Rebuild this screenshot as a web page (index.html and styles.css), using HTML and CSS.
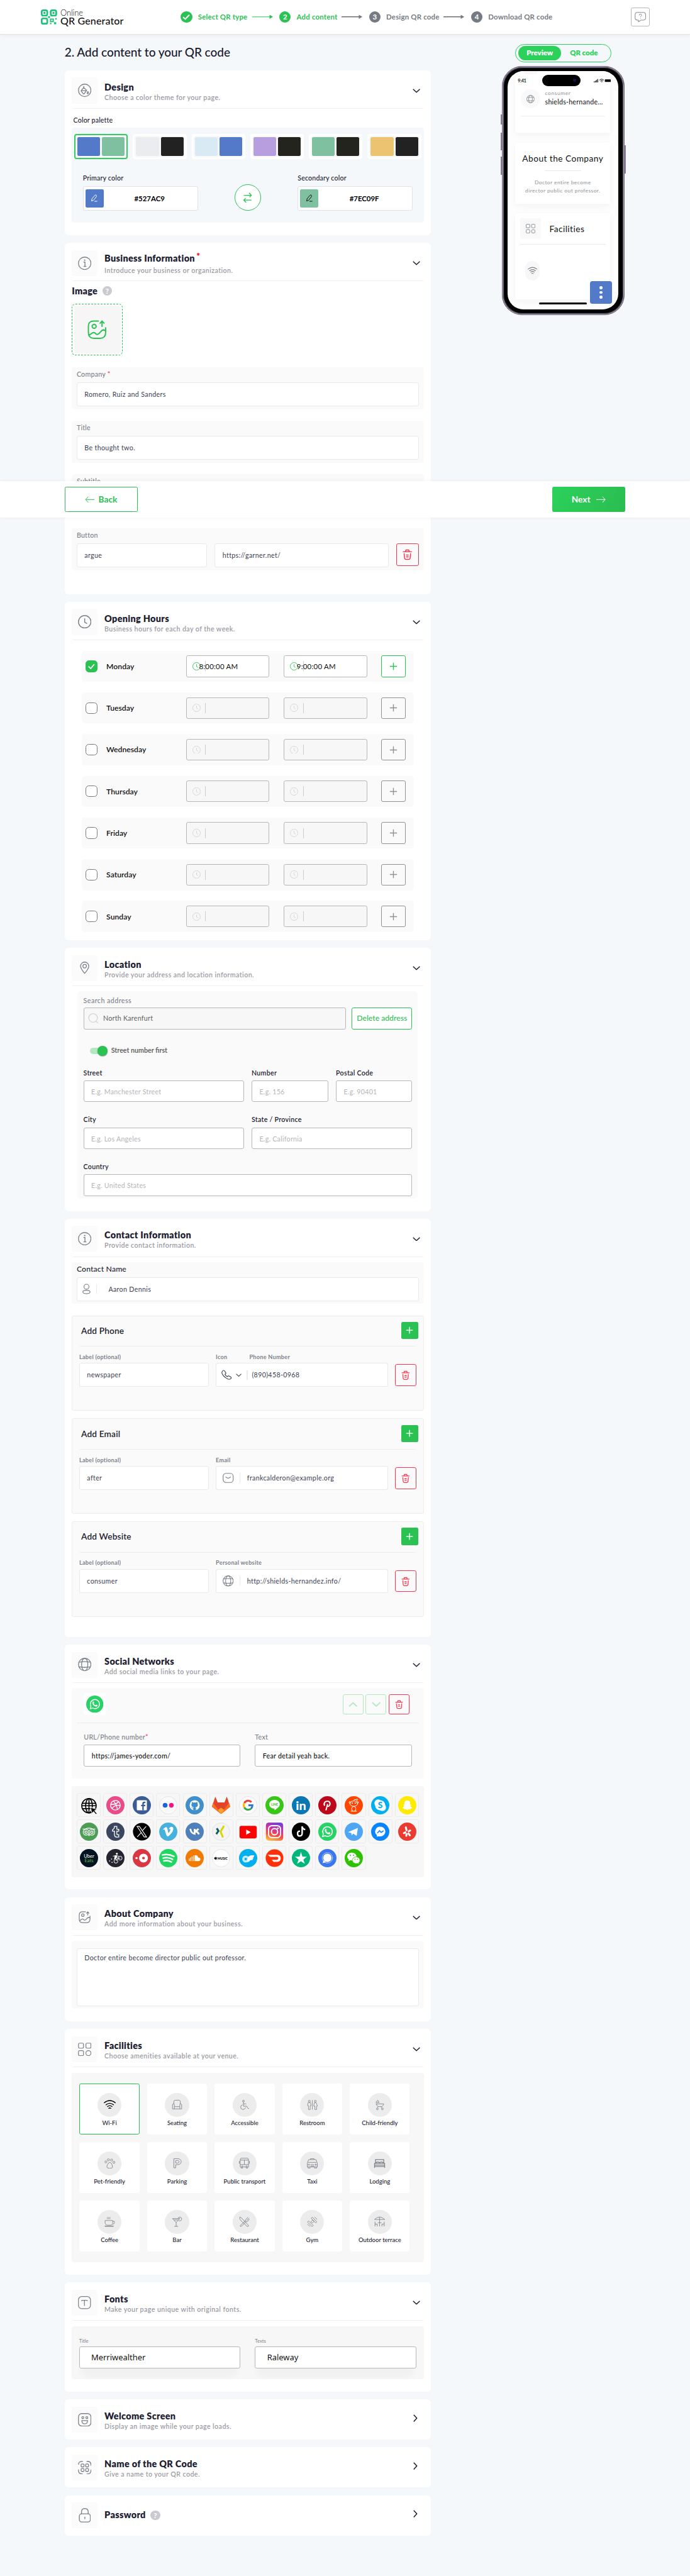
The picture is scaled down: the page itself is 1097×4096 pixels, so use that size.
FILE: index.html
```html
<!DOCTYPE html>
<html lang="en">
<head>
<meta charset="utf-8">
<title>Online QR Generator</title>
<link rel="stylesheet" href="styles.css">
</head>
<body>
<div class="page">
<svg class="defs" width="0" height="0">
  <symbol id="down" viewBox="0 0 16 9"><path d="M1 1l7 6.5L15 1" fill="none" stroke="currentColor" stroke-width="2"/></symbol>
  <symbol id="right" viewBox="0 0 9 16"><path d="M1 1l6.5 7L1 15" fill="none" stroke="currentColor" stroke-width="2"/></symbol>
  <symbol id="arrow" viewBox="0 0 44 10"><path d="M0 5h37" fill="none" stroke="currentColor" stroke-width="1.3"/><path class="tip" d="M36 .8L43.500 5 36 9.200z"/></symbol>
  <symbol id="info" viewBox="0 0 28 28"><circle cx="14" cy="14" r="13" fill="none" stroke="currentColor" stroke-width="1.7"/><path d="M11.500 11.500H14.500V20M11.500 20.500h6" fill="none" stroke="currentColor" stroke-width="1.800"/><circle cx="14" cy="7.500" r="1.500" fill="currentColor"/></symbol>
  <symbol id="clock" viewBox="0 0 28 28"><circle cx="14" cy="14" r="13" fill="none" stroke="currentColor" stroke-width="1.900"/><path d="M14 7v8l5 3" fill="none" stroke="currentColor" stroke-width="1.900"/></symbol>
  <symbol id="globe" viewBox="0 0 28 28"><g fill="none" stroke="currentColor" stroke-width="1.700"><circle cx="14" cy="14" r="13"/><ellipse cx="14" cy="14" rx="6.500" ry="13"/><path d="M2.500 9q11.500-2 23 0M2.500 19q11.500 2 23 0"/></g></symbol>
  <symbol id="photo" viewBox="0 0 40 40"><g fill="none" stroke="currentColor" stroke-width="2.600" stroke-linecap="round" stroke-linejoin="round"><path d="M23 2H13Q2 2 2 13v13q0 12 12 12h12q12 0 12-12V16M3 32l7-5q3-2 6 0l2 2q3 2 6-1l6-6q3-3 7 0"/><circle cx="14" cy="13" r="4.200"/><path d="M30.500 13V3M26.500 6.500l4-4.500 4 4.500"/></g></symbol>
  <symbol id="grid" viewBox="0 0 28 28"><g fill="none" stroke="currentColor" stroke-width="1.600"><rect x="1" y="1" width="10.500" height="10.500" rx="2.500"/><rect x="16.500" y="1" width="10.500" height="10.500" rx="2.500"/><rect x="1" y="16.500" width="10.500" height="10.500" rx="2.500"/><circle cx="21.750" cy="21.750" r="5.300"/></g></symbol>
  <symbol id="trash" viewBox="0 0 20 24"><g fill="none" stroke="currentColor" stroke-width="2" stroke-linecap="round"><path d="M1 6h18M6 5.500l1-3.500h6l1 3.500M3 10l1 10q.3 2.500 3 2.500h6q2.700 0 3-2.500L17 10M8 13h4M8 17h4"/></g></symbol>
  <symbol id="plus" viewBox="0 0 16 16"><path d="M8 1v14M1 8h14" fill="none" stroke="currentColor" stroke-width="1.700"/></symbol>
  <symbol id="pen" viewBox="0 0 16 16"><path d="M2 14l1-5 6-7q2-1.500 3 0t0 3l-6 7.500zM8 14.500h6" fill="none" stroke="currentColor" stroke-width="1.300"/></symbol>
  <symbol id="wifi" viewBox="0 0 24 20"><g fill="none" stroke="currentColor" stroke-width="1.700" stroke-linecap="round"><path d="M1 6Q12-3 23 6M4.500 10q7.500-6 15 0M7.500 13.500q4.500-3.500 9 0M10 17q2-1.500 4 0"/></g></symbol>
  <symbol id="whatsapp" viewBox="0 0 38 38"><circle cx="19" cy="19" r="19" fill="#27d366"/><path d="M9 29l1.500-5.400a10 10 0 1 1 4 4z" fill="none" stroke="#fff" stroke-width="2"/><path d="M15 13.500q1.500-1 2.500 2-.3 1.500-1 2 1.300 2.800 4.300 4 1-1.500 2-1.500l2.500 1.500q-.5 3-3.500 3-6.500-1-8.300-7.500 0-2.500 1.500-3.500z" fill="#fff"/></symbol>
</svg>

<header class="topbar">
  <div class="logo">
    <svg width="34" height="32" viewBox="0 0 34 32"><g fill="none" stroke="#1fc07a" stroke-width="3.500"><rect x="1.750" y="1.750" width="11.500" height="11" rx="3"/><rect x="20.500" y="1.750" width="11.500" height="11" rx="3"/><rect x="1.750" y="18.750" width="11.500" height="11" rx="3"/></g><g fill="#1fc07a"><rect x="5.500" y="5.300" width="4" height="4"/><rect x="24.300" y="5.300" width="4" height="4"/><rect x="15" y="14" width="4" height="4"/><path d="M19 19h8v7.500h-8zm2.300 2.300v3h3.300v-3zM30 18h3v3h-3zM27.500 26.500h4.500v4.500h-4.500zM19 28h3v3h-3z" fill-rule="evenodd"/></g></svg>
    <div class="logo-text"><span>Online</span><b>QR Generator</b></div>
  </div>
  <nav class="steps">
    <span class="step on"><i><svg width="16" height="13" viewBox="0 0 16 13"><path d="M1.500 7l4.500 4L14.500 2" fill="none" stroke="#fff" stroke-width="2.600"/></svg></i><b style="width:106px">Select QR type</b></span>
    <svg class="arr on" width="44" height="10"><use href="#arrow"/></svg>
    <span class="step on"><i>2</i><b style="width:87px">Add content</b></span>
    <svg class="arr" width="44" height="10"><use href="#arrow"/></svg>
    <span class="step"><i>3</i><b style="width:113px">Design QR code</b></span>
    <svg class="arr" width="44" height="10"><use href="#arrow"/></svg>
    <span class="step"><i>4</i><b style="width:138px">Download QR code</b></span>
  </nav>
  <span class="help"><svg width="24" height="22" viewBox="0 0 24 22"><path d="M6 1h12q5 0 5 5v6q0 5-5 5h-5l-5 4v-4H6q-5 0-5-5V6q0-5 5-5z" fill="none" stroke="#8b8f95" stroke-width="1.400"/><path d="M9.500 7q0-2.500 2.500-2.500T14.500 7q0 1.300-1.300 2T12 11M12 12.800v1.200" fill="none" stroke="#8b8f95" stroke-width="1.300"/></svg></span>
</header>

<div class="layout">
<main class="main">
  <h1>2. Add content to your QR code</h1>

  <section class="card design">
    <div class="head"><span class="ico"><svg width="28" height="28" viewBox="0 0 28 28"><g fill="none" stroke="currentColor" stroke-width="1.700"><circle cx="14" cy="14" r="13"/><path d="M12 5v4M12 8l6 6-5 7q-1 1-2 0l-4-5q-1-1 0-2zM6.500 14.500H18M20.500 16q2.500 4.500 0 5t0-5"/></g></svg></span><div><h2>Design</h2><p>Choose a color theme for your page.</p></div><svg class="chev" width="16" height="9"><use href="#down"/></svg></div>
    <h3 class="plabel">Color palette</h3>
    <div class="palette">
      <div class="swatches">
        <span class="sw sel"><i style="background:#527ac9"></i><i style="background:#7ec09f"></i></span>
        <span class="sw"><i style="background:#ebecf0"></i><i style="background:#222"></i></span>
        <span class="sw"><i style="background:#d9eaf5"></i><i style="background:#527ac9"></i></span>
        <span class="sw"><i style="background:#b69edf"></i><i style="background:#24241f"></i></span>
        <span class="sw"><i style="background:#7ec09f"></i><i style="background:#24241f"></i></span>
        <span class="sw"><i style="background:#ecc371"></i><i style="background:#222"></i></span>
      </div>
      <div class="colors">
        <div><label>Primary color</label><div class="cinput"><span style="background:#527ac9;color:#fff"><svg width="16" height="16"><use href="#pen"/></svg></span><b>#527AC9</b></div></div>
        <span class="swap"><svg width="20" height="22" viewBox="0 0 20 22"><path d="M2 6h16M13 1l5 5-4 4M18 16H2M7 21l-5-5 4-4" fill="none" stroke="#2bc253" stroke-width="1.700"/></svg></span>
        <div><label>Secondary color</label><div class="cinput"><span style="background:#7ec09f;color:#111"><svg width="16" height="16"><use href="#pen"/></svg></span><b>#7EC09F</b></div></div>
      </div>
    </div>
  </section>

  <section class="card business">
    <div class="head"><span class="ico"><svg width="28" height="28"><use href="#info"/></svg></span><div><h2>Business Information<sup>*</sup></h2><p>Introduce your business or organization.</p></div><svg class="chev" width="16" height="9"><use href="#down"/></svg></div>
    <div class="imgline"><h2>Image</h2><span class="q">?</span></div>
    <div class="upload"><span><svg width="40" height="40"><use href="#photo"/></svg></span></div>
    <div class="field"><label>Company <em>*</em></label><div class="in">Romero, Ruiz and Sanders</div></div>
    <div class="field"><label>Title</label><div class="in">Be thought two.</div></div>
    <div class="field"><label>Subtitle</label><div class="in"></div></div>
    <div class="field"><label>Button</label><div class="btnrow"><div class="in">argue</div><div class="in">https://garner.net/</div><span class="del"><svg width="20" height="23"><use href="#trash"/></svg></span></div></div>
  </section>

  <section class="card hours">
    <div class="head"><span class="ico"><svg width="28" height="28"><use href="#clock"/></svg></span><div><h2>Opening Hours</h2><p>Business hours for each day of the week.</p></div><svg class="chev" width="16" height="9"><use href="#down"/></svg></div>
    <div class="days">
      <div class="day on"><span class="cb"><svg width="14" height="12" viewBox="0 0 14 12"><path d="M1 6l4.500 4.500L13 1.500" fill="none" stroke="#fff" stroke-width="2.200"/></svg></span><b>Monday</b><span class="time"><svg width="17" height="17"><use href="#clock"/></svg><i></i><span>8:00:00 AM</span></span><span class="time"><svg width="17" height="17"><use href="#clock"/></svg><i></i><span>9:00:00 AM</span></span><span class="add"><svg width="17" height="17"><use href="#plus"/></svg></span></div>
      <div class="day"><span class="cb"></span><b>Tuesday</b><span class="time"><svg width="17" height="17"><use href="#clock"/></svg><i></i></span><span class="time"><svg width="17" height="17"><use href="#clock"/></svg><i></i></span><span class="add"><svg width="17" height="17"><use href="#plus"/></svg></span></div>
      <div class="day"><span class="cb"></span><b>Wednesday</b><span class="time"><svg width="17" height="17"><use href="#clock"/></svg><i></i></span><span class="time"><svg width="17" height="17"><use href="#clock"/></svg><i></i></span><span class="add"><svg width="17" height="17"><use href="#plus"/></svg></span></div>
      <div class="day"><span class="cb"></span><b>Thursday</b><span class="time"><svg width="17" height="17"><use href="#clock"/></svg><i></i></span><span class="time"><svg width="17" height="17"><use href="#clock"/></svg><i></i></span><span class="add"><svg width="17" height="17"><use href="#plus"/></svg></span></div>
      <div class="day"><span class="cb"></span><b>Friday</b><span class="time"><svg width="17" height="17"><use href="#clock"/></svg><i></i></span><span class="time"><svg width="17" height="17"><use href="#clock"/></svg><i></i></span><span class="add"><svg width="17" height="17"><use href="#plus"/></svg></span></div>
      <div class="day"><span class="cb"></span><b>Saturday</b><span class="time"><svg width="17" height="17"><use href="#clock"/></svg><i></i></span><span class="time"><svg width="17" height="17"><use href="#clock"/></svg><i></i></span><span class="add"><svg width="17" height="17"><use href="#plus"/></svg></span></div>
      <div class="day"><span class="cb"></span><b>Sunday</b><span class="time"><svg width="17" height="17"><use href="#clock"/></svg><i></i></span><span class="time"><svg width="17" height="17"><use href="#clock"/></svg><i></i></span><span class="add"><svg width="17" height="17"><use href="#plus"/></svg></span></div>
    </div>
  </section>

  <section class="card location">
    <div class="head"><span class="ico"><svg width="20" height="26" viewBox="0 0 20 26"><g fill="none" stroke="currentColor" stroke-width="1.700"><path d="M10 24.500Q1.500 15 1.500 9.500a8.500 8.500 0 0 1 17 0q0 5.500-8.500 15z"/><circle cx="10" cy="9.500" r="3.700"/></g></svg></span><div><h2>Location</h2><p>Provide your address and location information.</p></div><svg class="chev" width="16" height="9"><use href="#down"/></svg></div>
    <div class="loc">
      <label class="soft">Search address</label>
      <div class="search"><div class="box"><svg width="22" height="22" viewBox="0 0 22 22"><circle cx="10.500" cy="10" r="9" fill="none" stroke="#cfcfcf" stroke-width="1.500"/><path d="M16 16.500l5 4" stroke="#cfcfcf" stroke-width="1.500"/></svg><span>North Karenfurt</span></div><span class="delete">Delete address</span></div>
      <div class="toggle"><span class="track"><i></i></span><b>Street number first</b></div>
      <div class="lgrid">
        <div class="c1"><label>Street</label><div class="box">E.g. Manchester Street</div></div>
        <div class="c2"><label>Number</label><div class="box">E.g. 156</div></div>
        <div class="c3"><label>Postal Code</label><div class="box">E.g. 90401</div></div>
        <div class="c1"><label>City</label><div class="box">E.g. Los Angeles</div></div>
        <div class="c23"><label>State / Province</label><div class="box">E.g. California</div></div>
        <div class="c13"><label>Country</label><div class="box">E.g. United States</div></div>
      </div>
    </div>
  </section>

  <section class="card contact">
    <div class="head"><span class="ico"><svg width="28" height="28"><use href="#info"/></svg></span><div><h2>Contact Information</h2><p>Provide contact information.</p></div><svg class="chev" width="16" height="9"><use href="#down"/></svg></div>
    <div class="cname"><label>Contact Name</label><div class="in"><svg width="17" height="22" viewBox="0 0 17 22"><g fill="none" stroke="#7b828a" stroke-width="1.500"><circle cx="8.500" cy="6.500" r="5.200"/><ellipse cx="8.500" cy="17.500" rx="7.500" ry="3.600"/></g></svg><i></i><span>Aaron Dennis</span></div></div>
    <div class="group">
      <div class="ghead"><h3>Add Phone</h3><span><svg width="16" height="16"><use href="#plus"/></svg></span></div>
      <div class="grow"><div><label>Label (optional)</label><div class="in">newspaper</div></div>
      <div><div class="two"><label>Icon</label><label>Phone Number</label></div><div class="in ph"><svg width="22" height="22" viewBox="0 0 22 22"><path d="M2 3q3-3.500 5 0l2 3q1 2-1.500 3.500Q9 13 12.500 14.500q1.500-2.500 3.500-1.500l3.500 2q2.500 2-1 4.500-4 2-10.500-3.500T1 6q0-2 1-3z" fill="none" stroke="#3c4252" stroke-width="1.500"/></svg><svg width="12" height="7"><use href="#down"/></svg><i></i><span>(890)458-0968</span></div></div>
      <span class="del"><svg width="18" height="20"><use href="#trash"/></svg></span></div>
    </div>
    <div class="group">
      <div class="ghead"><h3>Add Email</h3><span><svg width="16" height="16"><use href="#plus"/></svg></span></div>
      <div class="grow"><div><label>Label (optional)</label><div class="in">after</div></div>
      <div><label>Email</label><div class="in em"><svg width="23" height="21" viewBox="0 0 23 21"><g fill="none" stroke="#7b828a" stroke-width="1.500"><rect x="1" y="1" width="21" height="19" rx="6"/><path d="M6 8q5.500 6 11 0"/></g></svg><i></i><span>frankcalderon@example.org</span></div></div>
      <span class="del"><svg width="18" height="20"><use href="#trash"/></svg></span></div>
    </div>
    <div class="group">
      <div class="ghead"><h3>Add Website</h3><span><svg width="16" height="16"><use href="#plus"/></svg></span></div>
      <div class="grow"><div><label>Label (optional)</label><div class="in">consumer</div></div>
      <div><label>Personal website</label><div class="in em"><svg width="23" height="23"><use href="#globe"/></svg><i></i><span>http://shields-hernandez.info/</span></div></div>
      <span class="del"><svg width="18" height="20"><use href="#trash"/></svg></span></div>
    </div>
  </section>

  <section class="card social">
    <div class="head"><span class="ico"><svg width="28" height="28"><use href="#globe"/></svg></span><div><h2>Social Networks</h2><p>Add social media links to your page.</p></div><svg class="chev" width="16" height="9"><use href="#down"/></svg></div>
    <div class="spanel">
      <div class="stop"><span class="wa"><svg width="36" height="36"><use href="#whatsapp"/></svg></span><span class="mv"><svg class="up" width="19" height="11"><use href="#down"/></svg></span><span class="mv"><svg width="19" height="11"><use href="#down"/></svg></span><span class="mv red"><svg width="17" height="19"><use href="#trash"/></svg></span></div>
      <div class="sfields"><div><label>URL/Phone number<em>*</em></label><div class="box">https://james-yoder.com/</div></div><div><label>Text</label><div class="box">Fear detail yeah back.</div></div></div>
    </div>
    <div class="tiles">
      <span><svg viewBox="0 0 38 38"><g fill="none" stroke="#000" stroke-width="2.200"><circle cx="19" cy="20" r="15"/><ellipse cx="19" cy="20" rx="7" ry="15"/><path d="M19 5v30M4 20h30M5 15h28M6 26h26"/></g><path d="M22 23l14 5-5 2.500 5 6-2.500 2-5-6-3 4z" fill="#000" stroke="#f7f7f7" stroke-width="1.400"/></svg></span>
      <span><svg viewBox="0 0 38 38"><circle cx="19" cy="19" r="19" fill="#ea4c89"/><g fill="none" stroke="#fff" stroke-width="1.800"><circle cx="19" cy="19" r="10"/><path d="M9.500 17q11 1 16-5.500M15 10q7 8 8 18M12 26q5-9 17-6.500"/></g></svg></span>
      <span><svg viewBox="0 0 38 38"><circle cx="19" cy="19" r="19" fill="#3a5a98"/><rect x="8.500" y="8.500" width="21" height="21" rx="1.500" fill="#fff"/><path d="M20 29.500V21h-2.500v-3H20v-2.500q0-4 4-4h2.500v3H25q-2 0-2 2V18h3.500l-.5 3h-3v8.500z" fill="#3a5a98"/></svg></span>
      <span><svg viewBox="0 0 38 38"><circle cx="19" cy="19" r="18.300" fill="#fafafa" stroke="#ddd"/><circle cx="12.500" cy="19" r="5" fill="#1a63dc"/><circle cx="25.500" cy="19" r="4.800" fill="#ff0d84"/></svg></span>
      <span><svg viewBox="0 0 38 38"><circle cx="19" cy="19" r="19" fill="#4190cd"/><circle cx="19" cy="19" r="10.500" fill="#fff"/><path d="M16 30v-4.500q-3 0-4.500-2.500 2 0 2.700 1.200l2 .3q.3-1 1-1.500-5-.5-5-5 0-1.700 1.100-2.900-.4-1.500.2-2.900 1.200 0 2.900 1.200 2.600-.6 5.200 0 1.700-1.200 2.900-1.200.6 1.400.2 2.900 1.100 1.200 1.100 2.900 0 4.500-5 5 .9.900.9 2.200V30z" fill="#4190cd"/></svg></span>
      <span><svg viewBox="0 0 38 38"><path d="M19 37L0 22 7 1l5 12h14l5-12 7 21z" fill="#e2432a"/><path d="M19 37L0 22l2.500-8L12 27zM19 37l19-15-2.500-8L26 27z" fill="#fc6d26"/><path d="M0 22l2.500-8L19 37zM38 22l-2.500-8L19 37z" fill="#fc6d26"/><path d="M19 37l-6.500-8 6.500-5 6.500 5z" fill="#fca326"/></svg></span>
      <span><svg viewBox="0 0 38 38"><circle cx="19" cy="19" r="18.300" fill="#fcfcfc" stroke="#ddd"/><g fill="none" stroke-width="4"><path d="M26 12.500A9.200 9.200 0 0 0 11 14.500" stroke="#ea4335"/><path d="M11 14.500a9.200 9.200 0 0 0 0 9" stroke="#fbbc05"/><path d="M11 23.500a9.200 9.200 0 0 0 14 2.500" stroke="#34a853"/><path d="M25 26q3-3 3-7h-8.500" stroke="#2f78d4"/></g></svg></span>
      <span><svg viewBox="0 0 38 38"><circle cx="19" cy="19" r="19" fill="#3ac619"/><path d="M19 8c6.500 0 11 4 11 9 0 5.500-7.500 9.500-11 12.500v-3.500c-6.500 0-11-4-11-9s4.500-9 11-9z" fill="#fff"/><text x="19" y="20" text-anchor="middle" font-size="6.500" fill="#3ac619" class="b">LINE</text></svg></span>
      <span><svg viewBox="0 0 38 38"><circle cx="19" cy="19" r="19" fill="#0a77b4"/><text x="19" y="29" text-anchor="middle" font-size="26" fill="#fff" class="b">in</text></svg></span>
      <span><svg viewBox="0 0 38 38"><circle cx="19" cy="19" r="19" fill="#bd081c"/><path d="M16 29.500l3.500-13M13.300 20q-2.500-4 .5-7.500 3.300-3 8-1.500 4 2.500 2.200 7.500-2.600 4.500-6 1.500" fill="none" stroke="#fff" stroke-width="2.600"/></svg></span>
      <span><svg viewBox="0 0 38 38"><circle cx="19" cy="19" r="19" fill="#ff4500"/><g fill="none" stroke="#fff" stroke-width="1.300"><ellipse cx="19" cy="15.500" rx="8" ry="5.500"/><ellipse cx="19" cy="26.500" rx="4.500" ry="5"/><path d="M19 10l1-3 4 .5M14 31l-1 .5h5M24 31l1 .5h-5"/><circle cx="25.500" cy="7.500" r="1.500"/><circle cx="11" cy="13" r="1.800"/><circle cx="27" cy="13" r="1.800"/></g><circle cx="16" cy="14.500" r="1.300" fill="#fff"/><circle cx="22" cy="14.500" r="1.300" fill="#fff"/></svg></span>
      <span><svg viewBox="0 0 38 38"><circle cx="19" cy="19" r="19" fill="#00aff0"/><rect x="7" y="7" width="15" height="15" rx="7" fill="#fff"/><rect x="16" y="16" width="15" height="15" rx="7" fill="#fff"/><circle cx="19" cy="19" r="10.500" fill="#fff"/><text x="19" y="25.500" text-anchor="middle" font-size="18" fill="#00aff0" class="b">S</text></svg></span>
      <span><svg viewBox="0 0 38 38"><circle cx="19" cy="19" r="19" fill="#ffea00"/><path d="M19 9q6 0 6 6v3l2.500-.5-2 3q1 3 4 4l-3.500 1.500-.5 1.500-3-.3L19 29l-3.500-1.800-3 .3-.5-1.500L8.500 24.500q3-1 4-4l-2-3 2.500.5v-3q0-6 6-6z" fill="#fff"/></svg></span>

      <span><svg viewBox="0 0 38 38"><circle cx="19" cy="19" r="19" fill="#4c9e55"/><g fill="none" stroke="#fff" stroke-width="1.700"><circle cx="13" cy="20" r="6"/><circle cx="25" cy="20" r="6"/><circle cx="13" cy="20" r="2.500"/><circle cx="25" cy="20" r="2.500"/><path d="M6 13.500h5q8-3.500 16 0h5M17.500 25l1.500 2 1.500-2"/></g></svg></span>
      <span><svg viewBox="0 0 38 38"><circle cx="19" cy="19" r="19" fill="#3a4560"/><path d="M17 8h5v6h4v4h-4v6q0 2 4 1.300V30q-9 2-9-5v-7h-4v-3q4-1.500 4-7z" fill="none" stroke="#fff" stroke-width="1.700"/></svg></span>
      <span><svg viewBox="0 0 38 38"><circle cx="19" cy="19" r="18.500" fill="#000"/><path d="M9 8h5l15 22h-5zM28 8l-8.500 9.500M18 20.500L9.500 30" fill="none" stroke="#fff" stroke-width="1.400"/></svg></span>
      <span><svg viewBox="0 0 38 38"><circle cx="19" cy="19" r="19" fill="#45b1dc"/><path d="M8 14q5-5 7-4.500t3 6.500 2 5.500 3-5-3-2.500q2-5.500 6.500-5t2.500 7-10.500 13q-3 0-4.500-6t-2.500-8-2.500 0z" fill="#fff"/></svg></span>
      <span><svg viewBox="0 0 38 38"><circle cx="19" cy="19" r="19" fill="#4f80b9"/><path d="M10 13q1.500 9.500 9 10.500V13M19 18q4.500-.5 8-5M20.500 17.500q5 1.500 7.500 7" fill="none" stroke="#fff" stroke-width="3.600"/></svg></span>
      <span><svg viewBox="0 0 38 38"><circle cx="19" cy="19" r="18.300" fill="#f4f4f4" stroke="#ddd"/><path d="M10 12l3.500 5.500L9 24" fill="none" stroke="#0a5f62" stroke-width="4"/><path d="M25 7l-7 12 5 12" fill="none" stroke="#d5d800" stroke-width="4"/></svg></span>
      <span><svg viewBox="0 0 38 38"><rect x="1" y="7" width="36" height="26" rx="4" fill="#f00"/><path d="M15 14.500l9.500 5.500-9.500 5.500z" fill="#fff"/></svg></span>
      <span><svg viewBox="0 0 38 38"><defs><linearGradient id="ig" x1=".2" y1="1" x2=".5" y2="0"><stop offset="0" stop-color="#fdc84c"/><stop offset=".35" stop-color="#f7503f"/><stop offset=".65" stop-color="#d4309a"/><stop offset="1" stop-color="#7a3fd0"/></linearGradient></defs><rect x="1" width="36" height="38" rx="6" fill="url(#ig)"/><g fill="none" stroke="#fff" stroke-width="2.500"><rect x="6.500" y="6.500" width="25" height="25" rx="7"/><circle cx="19" cy="19" r="6.500"/></g><circle cx="26" cy="12" r="1.700" fill="#fff"/></svg></span>
      <span><svg viewBox="0 0 38 38"><circle cx="19" cy="19" r="19" fill="#000"/><path d="M17 18q-5-.5-5 5t4.800 5 4.700-5.500V8q1 6 6.500 6.500" fill="none" stroke="#fff" stroke-width="3.200"/></svg></span>
      <span><svg><use href="#whatsapp"/></svg></span>
      <span><svg viewBox="0 0 38 38"><circle cx="19" cy="19" r="19" fill="#4fa6f5"/><path d="M7 20l20.500-9L25 28l-7-5-3 3.500-1.500-5z" fill="#fff"/></svg></span>
      <span><svg viewBox="0 0 38 38"><circle cx="19" cy="19" r="19" fill="#0a84ff"/><path d="M19 8.500a10.500 10 0 0 1 0 20.500q-2 0-4-.6L12 30v-4A10.500 10 0 0 1 19 8.500z" fill="#fff"/><path d="M13 22l4.500-5 3.500 3.500L26 17" fill="none" stroke="#0a84ff" stroke-width="2.200"/></svg></span>
      <span><svg viewBox="0 0 38 38"><circle cx="19" cy="19" r="19" fill="#ea3b31"/><g stroke="#fff" stroke-width="4" stroke-linecap="round"><path d="M17.500 16l-1.500-6M15 20.500l-3 1.500M17.500 24l-.5 3.500M21.500 23l3 3.500M22 18.500l3-2"/></g></svg></span>

      <span><svg viewBox="0 0 38 38"><circle cx="19" cy="19" r="19" fill="#031321"/><text x="19" y="18" text-anchor="middle" font-size="10" fill="#fff">Uber</text><text x="19" y="27" text-anchor="middle" font-size="10" fill="#68b643">Eats</text></svg></span>
      <span><svg viewBox="0 0 38 38"><circle cx="19" cy="19" r="19" fill="#24242e"/><g fill="none" stroke="#fff" stroke-width="1.300"><circle cx="20" cy="25.500" r="4"/><circle cx="29" cy="19" r="4"/><path d="M20 25l4-5 5-1M14 15l6-1 4 6M20 14l6 1"/></g><circle cx="22" cy="10" r="2" fill="#fff"/><path d="M18 13h5l-2 7-5 2zM6 24h2v2H6zM10 20h2v2h-2zM11 27h2v2h-2z" fill="#fff"/></svg></span>
      <span><svg viewBox="0 0 38 38"><circle cx="19" cy="19" r="19" fill="#da3743"/><circle cx="22.500" cy="19" r="6" fill="none" stroke="#fff" stroke-width="6.500"/><circle cx="8" cy="19" r="2.400" fill="#fff"/></svg></span>
      <span><svg viewBox="0 0 38 38"><circle cx="19" cy="19" r="19" fill="#1ed760"/><path d="M7 12.500q12-3 24 3M8.500 19q10-2.500 19.500 2.500M10 25q8-2 15.500 2" fill="none" stroke="#fff" stroke-width="3.300" stroke-linecap="round"/></svg></span>
      <span><svg viewBox="0 0 38 38"><circle cx="19" cy="19" r="19" fill="#f27a00"/><path d="M19 13q6-1.500 7.500 5 4.500-.5 4.500 3.700 0 3.500-4 3.500h-8zM16 13.500h1.500v11.700H16zM13 15.500h1.500v9.700H13zM10 17.700h1.500v7.500H10zM7 20h1.500v5H7z" fill="#fff"/></svg></span>
      <span><svg viewBox="0 0 38 38"><circle cx="19" cy="19" r="18.300" fill="#fefefe" stroke="#ddd"/><path d="M7.500 17.500q2.500-1 2.500 1.500l-.5 2.500q-2 1-4-.5-2-3.500 2-3.500zM7.500 16.500L8.500 15" fill="#111" stroke="#111" stroke-width=".5"/><text x="22" y="21.800" text-anchor="middle" font-size="6.500" class="b">MUSIC</text></svg></span>
      <span><svg viewBox="0 0 38 38"><circle cx="19" cy="19" r="19" fill="#00aff0"/><circle cx="14" cy="21" r="5" fill="none" stroke="#bfeafc" stroke-width="4.500"/><path d="M17 27q0-13 8-14h7l-2 5h-3l3 1-2 4-5 .5q-1 3.500-6 3.500z" fill="#fff"/></svg></span>
      <span><svg viewBox="0 0 38 38"><circle cx="19" cy="19" r="18.500" fill="#ff3008"/><path d="M5 12h19q8 0 8 7.500T24 27h-7l-4-4.500h11q3 0 3-3t-3-3H10z" fill="#fff"/></svg></span>
      <span><svg viewBox="0 0 38 38"><circle cx="19" cy="19" r="19" fill="#00b67a"/><path d="M19 6l3 10h9.500l-7.500 6 3 9-8-5.500-8 5.500 3-9-7.500-6H16z" fill="#fff"/></svg></span>
      <span><svg viewBox="0 0 38 38"><circle cx="19" cy="19" r="19" fill="#3a76f0"/><circle cx="19" cy="18.500" r="10.800" fill="none" stroke="#fff" stroke-width="1.300" stroke-dasharray="2 1"/><circle cx="19" cy="18.500" r="8.800" fill="#fff"/><path d="M9 29.500l2-6 5 4z" fill="#fff"/></svg></span>
      <span><svg viewBox="0 0 38 38"><circle cx="19" cy="19" r="19" fill="#2dc100"/><path d="M15 7.500a9.500 8.200 0 0 1 0 16.500L11 23.500l-3 2 .8-3.600A9.500 8.200 0 0 1 15 7.500z" fill="#fff"/><path d="M24 16.500a8.200 7 0 0 1 5.500 12l.5 3-3-1.500a8.200 7 0 1 1-3-13.500z" fill="#fff" stroke="#2dc100"/><g fill="#2dc100"><circle cx="12" cy="13" r="1.300"/><circle cx="18.500" cy="13" r="1.300"/><circle cx="21.500" cy="21.500" r="1"/><circle cx="26.500" cy="21.500" r="1"/></g></svg></span>
    </div>
  </section>

  <section class="card about">
    <div class="head"><span class="ico"><svg width="25" height="25"><use href="#photo"/></svg></span><div><h2>About Company</h2><p>Add more information about your business.</p></div><svg class="chev" width="16" height="9"><use href="#down"/></svg></div>
    <div class="apanel"><div class="area">Doctor entire become director public out professor.</div></div>
  </section>

  <section class="card facilities">
    <div class="head"><span class="ico"><svg width="28" height="28"><use href="#grid"/></svg></span><div><h2>Facilities</h2><p>Choose amenities available at your venue.</p></div><svg class="chev" width="16" height="9"><use href="#down"/></svg></div>
    <div class="fgrid">
      <div class="sel"><i><svg viewBox="0 0 24 20"><use href="#wifi"/></svg></i>Wi-Fi</div>
      <div><i><svg viewBox="0 0 24 24"><path d="M5 11V5q0-3 3-3h8q3 0 3 3v6M2 12q0-2 2-2t2 2v4h12v-4q0-2 2-2t2 2v9h-4H2zM6 16v5M18 16v5"/></svg></i>Seating</div>
      <div><i><svg viewBox="0 0 24 24"><circle cx="10" cy="4" r="2"/><path d="M10 6v9h7l3 5h2M10 10h6M8 12q-4 1-4 5t4 5 7-4"/></svg></i>Accessible</div>
      <div><i><svg viewBox="0 0 28 24"><path d="M14 1v22M4 7h6l1 7H9v9H5v-9H3zM19 7h4l3 8h-2v8h-4v-8h-3z"/><circle cx="7" cy="3.500" r="2.200"/><circle cx="21" cy="3.500" r="2.200"/></svg></i>Restroom</div>
      <div><i><svg viewBox="0 0 24 24"><path d="M4 10h17q-1 6-7 6h-3q-5 0-6-6zM4 7l4-5 3 5zM9 16l-2 3M15 16l2 3"/><circle cx="7" cy="21" r="2"/><circle cx="18" cy="21" r="2"/></svg></i>Child-friendly</div>
      <div><i><svg viewBox="0 0 24 24"><path d="M12 10q3 0 4.500 4T18 21q-1 2-6 2t-6-2q-1-3 1.500-7T12 10z"/><circle cx="9" cy="4.500" r="2.300"/><circle cx="16" cy="5" r="2.300"/><circle cx="3.500" cy="9" r="2.200"/><circle cx="21" cy="10" r="2.200"/></svg></i>Pet-friendly</div>
      <div><i><svg viewBox="0 0 24 24"><path d="M5 2h9q7 1 7 6.500T14 15H9v7H5zM9 6v5.500h4.500q3-.5 3-2.800T13.500 6z"/></svg></i>Parking</div>
      <div><i><svg viewBox="0 0 24 24"><path d="M3 4q0-3 3-3h12q3 0 3 3v16H3zM3 15h18M3 5h18M12 5v10M1 7v6M23 7v6M5 20v3h3v-3M16 20v3h3v-3M6 18h3M15 18h3"/></svg></i>Public transport</div>
      <div><i><svg viewBox="0 0 26 24"><path d="M2 12l3-8h16l3 8v8H2zM4 10h18M9 4V2h8v2M4 20v3h4v-3M18 20v3h4v-3M9 15h8M9 18h8"/><circle cx="5.500" cy="15" r="1.500"/><circle cx="20.500" cy="15" r="1.500"/></svg></i>Taxi</div>
      <div><i><svg viewBox="0 0 26 24"><path d="M4 12V4h18v8M2 12h22v7H2zM2 19v3M24 19v3M5 12q0-3 4-3t4 3q0-3 4-3t4 3M2 16h22" stroke-width="1.700"/></svg></i>Lodging</div>
      <div><i><svg viewBox="0 0 26 26"><path d="M2 10h18v5q0 6-6 6H8q-6 0-6-6zM20 12h4v3q0 3-4 4M1 23h21l-2 2H3zM8 7q-2-2 0-5M11 7q-2-2 0-5M14 7q-2-2 0-5"/></svg></i>Coffee</div>
      <div><i><svg viewBox="0 0 24 24"><path d="M2 5h16l-8 8.500zM10 13.500V22M6 22h8M5 8h10M14 5q1-4 5-3t3 5-6 3"/></svg></i>Bar</div>
      <div><i><svg viewBox="0 0 24 24"><path d="M2 2q-1 4 3 8l13 12q3 1 3-2L4 2zM22 4l-5 5M20 2l-5 5q-2 2 0 4t4 0l4-5M14 10L3 20q-1 3 2 2l11-10"/></svg></i>Restaurant</div>
      <div><i><svg viewBox="0 0 24 24"><path d="M9 12l4-4 3 3-4 4zM4 10l10 10-2.500 2.500L1.500 12.500zM1.500 17l5.500 5.500M12 2l10 10-2.500 2.500L9.500 4.500zM17 1.500L22.500 7"/></svg></i>Gym</div>
      <div><i><svg viewBox="0 0 24 24"><path d="M1 7q11-11 22 0zM12 2v20M8 14h8M2 12v10M2 17h5v5M22 12v10M22 17h-5v5"/></svg></i>Outdoor terrace</div>
    </div>
  </section>

  <section class="card fonts">
    <div class="head"><span class="ico"><svg width="27" height="27" viewBox="0 0 28 28"><g fill="none" stroke="currentColor" stroke-width="1.700"><rect x="1" y="1" width="26" height="26" rx="7"/><path d="M7.500 11q0-2 2-2h9q2 0 2 2M14 9v12"/></g></svg></span><div><h2>Fonts</h2><p>Make your page unique with original fonts.</p></div><svg class="chev" width="16" height="9"><use href="#down"/></svg></div>
    <div class="ffields"><div><label>Title</label><div class="box">Merriwealther</div></div><div><label>Texts</label><div class="box">Raleway</div></div></div>
  </section>

  <section class="card shut"><div class="head"><span class="ico"><svg width="28" height="28" viewBox="0 0 28 28"><g fill="none" stroke="currentColor" stroke-width="1.700"><rect x="1" y="1" width="26" height="26" rx="7"/><circle cx="10" cy="9.500" r="2"/><circle cx="18.500" cy="9.500" r="2"/><path d="M8 15.500h12q0 7-6 7t-6-7z"/></g></svg></span><div><h2>Welcome Screen</h2><p>Display an image while your page loads.</p></div><svg class="chev" width="9" height="16"><use href="#right"/></svg></div></section>
  <section class="card shut"><div class="head"><span class="ico"><svg width="28" height="28" viewBox="0 0 28 28"><g fill="none" stroke="currentColor" stroke-width="1.700"><path d="M1 8Q1 1 8 1h2M18 1h2q7 0 7 7v2M27 18v2q0 7-7 7h-2M10 27H8q-7 0-7-7v-2"/><rect x="6.500" y="6.500" width="6" height="6" rx="1.500"/><rect x="16" y="6.500" width="6" height="6" rx="1.500"/><rect x="6.500" y="16" width="6" height="6" rx="1.500"/><rect x="16" y="16" width="6" height="6" rx="1.500"/></g></svg></span><div><h2>Name of the QR Code</h2><p>Give a name to your QR code.</p></div><svg class="chev" width="9" height="16"><use href="#right"/></svg></div></section>
  <section class="card shut"><div class="head"><span class="ico"><svg width="26" height="30" viewBox="0 0 26 30"><g fill="none" stroke="currentColor" stroke-width="1.800"><rect x="1.500" y="12" width="23" height="17" rx="5"/><path d="M6 12V8q0-7 7-7t7 7v4M13 18v5"/></g></svg></span><div class="pw"><h2>Password</h2><span class="q">?</span></div><svg class="chev" width="9" height="16"><use href="#right"/></svg></div></section>
</main>

<aside class="side">
  <div class="tabs"><b class="cur">Preview</b><b>QR code</b></div>
  <div class="phone">
    <i class="key k1"></i><i class="key k2"></i><i class="key k3"></i><i class="key k4"></i>
    <div class="screen">
      <div class="status"><b>9:41</b><svg width="36" height="8" viewBox="0 0 36 8"><path d="M0 6h1.500v2H0zM2.500 4.500H4V8H2.500zM5 3h1.500v5H5zM7.500 1H9v7H7.500zM24 1.500h10.500q1 0 1 1v3.500q0 1-1 1H24q-1 0-1-1V2.500q0-1 1-1z"/><path d="M12 3.200q4.500-4 9 0M13.800 5.200q2.700-2.300 5.400 0M15.500 7q1-.8 2 0" fill="none" stroke="#000" stroke-width="1.300"/></svg></div>
      <div class="notch"><i></i></div>
      <div class="pc p1"><span class="peek"></span><div class="prow"><span class="round"><svg width="17" height="17"><use href="#globe"/></svg></span><div><small>consumer</small><span>shields-hernande...</span></div></div></div>
      <div class="pc p2"><h4>About the Company</h4><i></i><p>Doctor entire become<br>director public out professor.</p></div>
      <div class="pc p3"><div class="fh"><span><svg width="20" height="20"><use href="#grid"/></svg></span><h4>Facilities</h4></div><span class="wf"><svg width="20" height="17"><use href="#wifi"/></svg></span></div>
      <div class="more"><i></i><i></i><i></i></div>
      <div class="homebar"></div>
    </div>
  </div>
</aside>
</div>

<footer class="actions">
  <span class="back"><svg width="20" height="14" viewBox="0 0 20 14"><path d="M20 7H1.500M7 1L1.500 7 7 13" fill="none" stroke="currentColor" stroke-width="1.300"/></svg>Back</span>
  <span class="next">Next<svg width="20" height="14" viewBox="0 0 20 14"><path d="M0 7h18.500M13 1l5.500 6-5.500 6" fill="none" stroke="currentColor" stroke-width="1.300"/></svg></span>
</footer>
</div>
</body>
</html>
```

FILE: styles.css
```css
html { background: #f4f8fb; }
* { box-sizing: border-box; }
body { margin: 0; }
.page {
  zoom: 0.762;
  position: relative;
  height: 5375px;
  overflow: hidden;
  background: #f4f8fb;
  font-family: Lato, "Open Sans", sans-serif;
  color: #1e1e32;
  font-size: 14px;
}
h1, h2, h3, h4, p { margin: 0; font-weight: 400; }
svg { display: block; flex: none; }
label { display: block; }
em { font-style: normal; color: #f5364f; }
.defs { position: absolute; }
.b { font-weight: 900; }

/* top bar */
.topbar { height: 72px; background: #fff; border-bottom: 1px solid #e2e5e8; box-shadow: 0 3px 8px rgba(0,0,0,.06); display: flex; align-items: center; padding: 0 84px 0 85px; position: relative; }
.logo { display: flex; gap: 7px; width: 292px; align-items: center; }
.logo-text { display: flex; flex-direction: column; color: #111; }
.logo-text span { font-size: 17px; line-height: 16px; font-weight: 300; letter-spacing: -.2px; }
.logo-text b { font-size: 21px; line-height: 18px; font-weight: 500; letter-spacing: .2px; white-space: nowrap; }
.steps { display: flex; align-items: center; gap: 7px; }
.step { display: flex; align-items: center; gap: 12px; color: #757b83; }
.step i { width: 24px; height: 24px; border-radius: 50%; background: #757b83; color: #fff; font: 700 15px/24px Lato; display: flex; align-items: center; justify-content: center; }
.step b { font-size: 15px; white-space: nowrap; letter-spacing: .25px; }
.step.on { color: #2bc253; }
.step.on i { background: #2bc253; }
.arr { color: #1e1e32; margin-right: 6px; fill: #757b83; }
.arr.on { color: #2bc253; fill: #2bc253; }
.help { margin-left: auto; width: 40px; height: 40px; border: 1px solid #b5b7ba; border-radius: 4px; display: flex; align-items: center; justify-content: center; }

.layout { display: flex; gap: 148px; padding: 18px 0 0 135px; align-items: flex-start; }
.main { width: 764px; flex: none; display: flex; flex-direction: column; gap: 16px; }
h1 { font-size: 25px; line-height: 36px; font-weight: 500; margin-bottom: 5px; letter-spacing: -.1px; color: #1a1a2e; }

/* cards */
.card { background: #fff; border-radius: 8px; padding: 15px; }
.head { display: flex; align-items: flex-start; height: 65px; margin: 0 1px; border-bottom: 2px solid #eff0f1; padding-right: 6px; }
.ico { width: 53px; height: 54px; margin: 0 15px 0 -1px; background: #fbfbfb; border-radius: 4px; display: flex; align-items: center; justify-content: center; color: #7b828a; }
.head h2 { font-size: 19px; font-weight: 800; line-height: 24px; margin-top: 8px; color: #1e1e32; letter-spacing: .4px; }
.head p { font-size: 14px; font-weight: 600; line-height: 18px; color: #9b9ba3; letter-spacing: .55px; }
.head sup { color: #e8112d; font-size: 18px; line-height: 0; vertical-align: 6px; margin-left: 3px; }
.head .chev { margin: 23px 0 0 auto; color: #1e1e32; }
.shut { height: 84px; }
.shut .head { border: 0; }
.shut .head .chev { margin: 16px 6px 0 auto; }
.pw { display: flex; gap: 10px; align-items: center; height: 54px; }
.pw h2 { margin: 0; }
.q { width: 20px; height: 20px; border-radius: 50%; background: #cacacf; color: #fff; font: 700 15px/20px Lato; text-align: center; }

/* design */
.design { height: 344px; }
.plabel { margin: 12px 0 0 3px; font-size: 14px; line-height: 24px; height: 28px; font-weight: 500; letter-spacing: .2px; }
.palette { background: #f4f8fb; border-radius: 5px; height: 198px; padding: 12px 5px; }
.swatches { display: flex; justify-content: space-between; }
.sw { width: 112px; height: 53px; background: #fff; border: 3px solid #fff; border-radius: 5px; padding: 4px; display: flex; gap: 4px; }
.sw.sel { border-color: #2bd15a; }
.sw i { flex: 1; border-radius: 3px; box-shadow: 0 0 0 1px #fff, 0 0 0 2px #ececec; }
.colors { display: flex; justify-content: space-between; align-items: flex-end; padding: 29px 18px 0; }
.colors label { font-size: 14px; font-weight: 500; line-height: 20px; margin-bottom: 7px; letter-spacing: .2px; }
.cinput { width: 240px; height: 52px; background: #fff; border: 2px solid #dfe3e7; border-radius: 4px; display: flex; align-items: center; padding-left: 4px; }
.cinput span { width: 38px; height: 39px; border-radius: 3px; display: flex; align-items: center; justify-content: center; }
.cinput b { flex: 1; text-align: center; color: #000; font-size: 15px; padding-right: 4px; }
.swap { width: 55px; height: 55px; border: 1px solid #2bc253; border-radius: 50%; background: #fff; display: flex; align-items: center; justify-content: center; }

/* business */
.business { height: 733px; }
.business .head h2 { margin-top: 6px; }
.business .head p { margin-top: 3px; }
.business .head .chev { margin-top: 23px; }
.imgline { display: flex; align-items: center; gap: 10px; height: 27px; margin-top: 7px; }
.imgline h2 { font-size: 19px; font-weight: 800; letter-spacing: .3px; }
.upload { width: 106px; height: 108px; margin-top: 13px; border: 1px dashed #2bc253; border-radius: 8px; padding: 3px; color: #2bc253; }
.upload span { display: flex; height: 100%; background: #f6f6f6; border-radius: 5px; align-items: center; justify-content: center; }
.field { margin-top: 24px; height: 88px; padding: 4px 10px 6px; background: #fafafa; border-radius: 5px; }
.field label { font-size: 14px; font-weight: 500; color: #7b828a; line-height: 22px; margin-bottom: 6px; letter-spacing: .3px; }
.in { height: 50px; border: 2px solid #e9e9e9; border-radius: 4px; background: #fff; padding-left: 15px; font-size: 14px; line-height: 47px; color: #3c4252; letter-spacing: .45px; white-space: nowrap; }
.btnrow { display: grid; grid-template-columns: 272px 363px 47px; gap: 16px; }
.del { height: 47px; border: 1px solid #f5364f; border-radius: 4px; color: #f5364f; display: flex; align-items: center; justify-content: center; }

/* hours */
.hours { height: 706px; }
.days { display: flex; flex-direction: column; gap: 22px; margin: 22px 20px 0; }
.day { height: 65px; background: #fafafa; border-radius: 6px; padding: 0 16px 0 9px; display: flex; align-items: center; color: #8e9197; }
.cb { width: 24px; height: 24px; border: 2px solid #757b83; border-radius: 7px; background: #fff; display: flex; align-items: center; justify-content: center; }
.on .cb { background: #2bc253; border-color: #2bc253; }
.day b { width: 166px; margin-left: 19px; font-weight: 600; font-size: 16px; color: #111; }
.time { width: 174px; height: 45px; border: 1px solid #b5b7ba; border-radius: 4px; background: #f7f7f7; margin-right: 30px; display: flex; align-items: center; padding-left: 12px; color: #d3d3d3; }
.time i { width: 1px; height: 21px; background: #ccc; margin-left: 10px; }
.on .time { background: #fff; color: #2bc253; }
.time span { color: #111; font-size: 15px; margin: 1px 0 0 -14px; white-space: nowrap; letter-spacing: .3px; }
.add { width: 51px; height: 45px; border: 1px solid #8e9197; border-radius: 4px; display: flex; align-items: center; justify-content: center; }
.on .add { color: #2bc253; border-color: #2bc253; background: #fff; }

/* location */
.location { height: 549px; }
.loc { margin: 11px 12px 0; height: 432px; background: #fafafa; border-radius: 8px; padding: 8px 12px; }
.loc label { font-size: 14px; font-weight: 600; line-height: 20px; letter-spacing: .35px; }
.loc label.soft { color: #7b828a; font-weight: 500; letter-spacing: .6px; }
.box { height: 45px; border: 1px solid #b5b7ba; border-radius: 4px; background: #fff; padding-left: 15px; line-height: 45px; white-space: nowrap; color: #b5b5b9; letter-spacing: .35px; }
.search { display: flex; gap: 12px; align-items: flex-end; margin-top: 5px; }
.search .box { width: 548px; background: #f7f7f7; display: flex; align-items: center; gap: 9px; padding-left: 9px; color: #606166; }
.delete { width: 126px; height: 46px; border: 1px solid #2bc253; border-radius: 4px; background: #fff; color: #2bc253; font-size: 16px; line-height: 43px; text-align: center; font-weight: 500; white-space: nowrap; }
.toggle { display: flex; align-items: center; gap: 10px; height: 20px; margin: 35px 0 36px 14px; color: #666; font-size: 14px; }
.toggle b { margin-top: -3px; }
.track { width: 34px; height: 14px; border-radius: 7px; background: #b2e8c0; display: flex; align-items: center; justify-content: flex-end; }
.track i { width: 20px; height: 20px; border-radius: 50%; background: #2bc253; box-shadow: 0 1px 2px rgba(0,0,0,.4); flex: none; margin-right: -2px; }
.lgrid { display: grid; grid-template-columns: 335px 160px 159px; column-gap: 16px; row-gap: 26px; margin-top: -11px; }
.lgrid label { height: 27px; }
.c23 { grid-column: 2 / 4; }
.c13 { grid-column: 1 / 4; }

/* contact */
.contact { height: 873px; }
.cname { margin-top: 11px; height: 87px; background: #fafafa; border-radius: 5px; padding: 3px 10px; }
.cname label { font-size: 16px; font-weight: 500; line-height: 24px; height: 28px; letter-spacing: .2px; }
.cname .in, .ph, .em { display: flex; align-items: center; }
.cname .in { padding-left: 11px; }
.in i { width: 2px; height: 20px; background: #e9e9e9; }
.cname i { margin: 0 24px 0 11px; }
.group { margin-top: 24px; height: 199px; border: 1px solid #ececec; border-radius: 4px; background: #fafafa; padding: 12px 14px; }
.group + .group { margin-top: 16px; }
.ghead { display: flex; justify-content: space-between; height: 52px; border-bottom: 1px solid #ececec; margin: 0 2px; padding-left: 2px; }
.ghead h3 { font-size: 18px; font-weight: 600; line-height: 36px; letter-spacing: .2px; }
.ghead span { width: 36px; height: 36px; margin-right: -6px; background: #2bc253; border-radius: 3px; color: #fff; display: flex; align-items: center; justify-content: center; }
.grow { display: grid; grid-template-columns: 270px 359px 45px; column-gap: 15px; margin-top: 11px; }
.grow label { font-size: 12px; font-weight: 700; line-height: 20px; height: 23px; color: #7b828a; letter-spacing: .35px; white-space: nowrap; }
.two { display: flex; }
.two label:first-child { width: 70px; }
.grow .del { height: 45px; margin-top: 26px; }
.in.ph { padding-left: 11px; color: #3c4252; }
.ph svg + svg { margin-left: 8px; }
.ph i { margin: 0 9px 0 10px; }
.in.em { padding-left: 13px; color: #7b828a; }
.em i { margin: 0 14px 0 12px; }
.em span { color: #3c4252; }

/* social */
.social { height: 511px; }
.spanel { margin-top: 11px; height: 189px; background: #fafafa; border-radius: 5px; padding: 10px 10px 0; }
.stop { display: flex; align-items: flex-start; height: 63px; border-bottom: 2px solid #ececec; padding: 0 20px 0 15px; gap: 5px; }
.wa { width: 46px; height: 46px; background: #fff; border-radius: 4px; padding: 5px; margin-right: auto; }
.mv { width: 43px; height: 43px; margin-top: 2px; border: 1px solid #b2e8c0; border-radius: 4px; color: #b2e8c0; display: flex; align-items: center; justify-content: center; }
.mv.red { border-color: #f5364f; color: #f5364f; }
.up { transform: rotate(180deg); }
.sfields { display: grid; grid-template-columns: 327px 327px; gap: 30px; padding: 18px 15px 0; }
.sfields label { color: #7b828a; font-weight: 500; line-height: 20px; height: 27px; letter-spacing: .3px; }
.sfields .box { color: #111; font-weight: 500; }
.tiles { margin-top: 15px; height: 190px; background: #f7f7f7; border-radius: 5px; padding: 15px 10px; display: grid; grid-template-columns: repeat(13, 50px); justify-content: space-between; row-gap: 5px; grid-auto-rows: 50px; }
.tiles span { border: 1px solid #ececec; border-radius: 4px; padding: 5px; }
.tiles svg { width: 38px; height: 38px; }

/* about */
.about { height: 259px; }
.apanel { margin-top: 11px; height: 142px; background: #fafafa; border-radius: 5px; padding: 16px 10px 0; }
.area { height: 120px; border: 2px solid #e9e9e9; border-radius: 4px; background: #fff; padding: 8px 15px; font-size: 14px; line-height: 20px; color: #3c4252; letter-spacing: .45px; }

/* facilities */
.facilities { height: 513px; }
.fgrid { margin-top: 11px; height: 396px; background: #f7f7f7; border-radius: 5px; padding: 23px 16px; display: grid; grid-template-columns: repeat(5, 125px); grid-auto-rows: 106px; gap: 16px; }
.fgrid > div { background: #fff; border: 2px solid #fff; border-radius: 4px; padding-top: 18px; text-align: center; font-size: 12.500px; font-weight: 500; line-height: 26px; white-space: nowrap; }
.fgrid > .sel { border-color: #2bc253; }
.fgrid i { width: 50px; height: 50px; border-radius: 50%; background: #ececec; margin: 0 auto; display: flex; align-items: center; justify-content: center; color: #7b828a; }
.fgrid .sel i { color: #000; }
.fgrid svg { width: 25px; height: 23px; fill: none; stroke: #7b828a; stroke-width: 1.200; }

/* fonts */
.fonts { height: 228px; }
.ffields { margin-top: 11px; height: 111px; background: #f7f7f7; border-radius: 5px; padding: 21px 15px; display: grid; grid-template-columns: 337px 337px; gap: 30px; }
.ffields label { font-size: 10px; color: #7b828a; line-height: 20px; height: 22px; }
.ffields .box { font: 400 17px/43px "Noto Sans", sans-serif; color: #111; padding-left: 24px; letter-spacing: 0; box-shadow: 0 22px 14px -6px rgba(0,0,0,.03); }

/* phone preview */
.side { width: 256px; flex: none; margin-top: 2px; }
.tabs { width: 200px; height: 38px; margin: 0 auto 8px 28px; border: 2px solid #2bd15a; border-radius: 19px; padding: 2px 5px; display: flex; align-items: center; color: #2bd15a; font-size: 15px; line-height: 30px; text-align: center; }
.tabs b { width: 94px; font-weight: 800; }
.tabs .cur { width: 90px; background: #2bd15a; color: #fff; border-radius: 15px; }
.phone { position: relative; height: 520px; background: #000; border-radius: 42px; border: 1.500px solid #6f6679; box-shadow: inset 0 0 0 1px #d0c8d6, inset 0 0 0 3px #4a4454; padding: 9px 11px 10px; }
.key { position: absolute; width: 3px; background: #8a7f94; }
.k1 { left: -4px; top: 100px; height: 20px; }
.k2 { left: -4px; top: 137px; height: 38px; }
.k3 { left: -4px; top: 187px; height: 38px; }
.k4 { right: -4px; top: 164px; height: 59px; }
.screen { position: relative; height: 497px; background: #fdfdfd; border-radius: 33px; overflow: hidden; padding: 0 16px; display: flex; flex-direction: column; gap: 20px; font-family: Lato, sans-serif; color: #111; }
.status { position: absolute; left: 21px; right: 16px; top: 12px; height: 16px; display: flex; align-items: center; justify-content: space-between; font-size: 9px; z-index: 1; }
.notch { position: absolute; left: 72px; top: 8px; width: 80px; height: 23px; border-radius: 12px; background: #000; z-index: 1; }
.notch i { position: absolute; right: 9px; top: 8px; width: 7px; height: 7px; border-radius: 50%; background: #10144a; }
.pc { background: #fff; border-radius: 4px; box-shadow: 0 4px 16px rgba(0,0,0,.04); width: 198px; flex: none; }
.p1 { height: 129px; padding: 0 12px; }
.peek { display: block; width: 30px; height: 6px; margin: 0 0 32px 5px; background: #f7f7f7; border-radius: 0 0 15px 15px; }
.prow { display: flex; gap: 10px; height: 56px; border-bottom: 1px solid #ececec; }
.round { width: 40px; height: 40px; border-radius: 50%; background: #f9f9f9; display: flex; align-items: center; justify-content: center; color: #7b828a; flex: none; }
.prow small { display: block; font-size: 11px; line-height: 16px; color: #8e9197; letter-spacing: .8px; }
.prow div span { font-size: 14px; line-height: 20px; white-space: nowrap; letter-spacing: .3px; }
.p2 { height: 128px; text-align: center; padding-top: 22px; }
.pc h4 { font-size: 18px; line-height: 24px; white-space: nowrap; letter-spacing: .6px; }
.p2 i { display: block; width: 76px; height: 1px; background: #e9e9e9; margin: 12px auto 17px; }
.p2 p { font-size: 11px; line-height: 16px; color: #8e9197; white-space: nowrap; letter-spacing: .6px; }
.p3 { height: 180px; padding: 10px; }
.fh { display: flex; gap: 17px; align-items: flex-start; height: 55px; border-bottom: 1px solid #ececec; }
.fh span { width: 44px; height: 44px; background: #f9f9f9; border-radius: 4px; display: flex; align-items: center; justify-content: center; color: #7b828a; }
.fh h4 { line-height: 44px; }
.wf { width: 31px; height: 40px; border-radius: 15px; background: #f7f7f7; display: flex; align-items: center; justify-content: center; color: #7b828a; margin: 35px 0 0 10px; }
.more { position: absolute; left: 172px; top: 439px; width: 46px; height: 46px; border-radius: 5px; background: #527ac9; display: flex; flex-direction: column; align-items: center; justify-content: center; gap: 4px; }
.more i { width: 6px; height: 6px; border-radius: 50%; background: #fff; }
.homebar { position: absolute; left: 65px; top: 483px; width: 100px; height: 4px; border-radius: 2px; background: #000; }

/* sticky action bar */
.actions { position: absolute; top: 1004px; left: 0; right: 0; height: 76px; background: #fff; box-shadow: 0 0 8px rgba(0,0,0,.06); display: flex; justify-content: space-between; align-items: center; padding: 0 135px; z-index: 2; }
.actions span { width: 152px; height: 52px; border-radius: 3px; display: flex; align-items: center; justify-content: center; gap: 8px; font-size: 18px; font-weight: 700; }
.back { border: 1px solid #2bc253; color: #2bc253; }
.actions .next { background: linear-gradient(120deg, #2bd15a, #2bbd50); color: #fff; gap: 13px; }
```
